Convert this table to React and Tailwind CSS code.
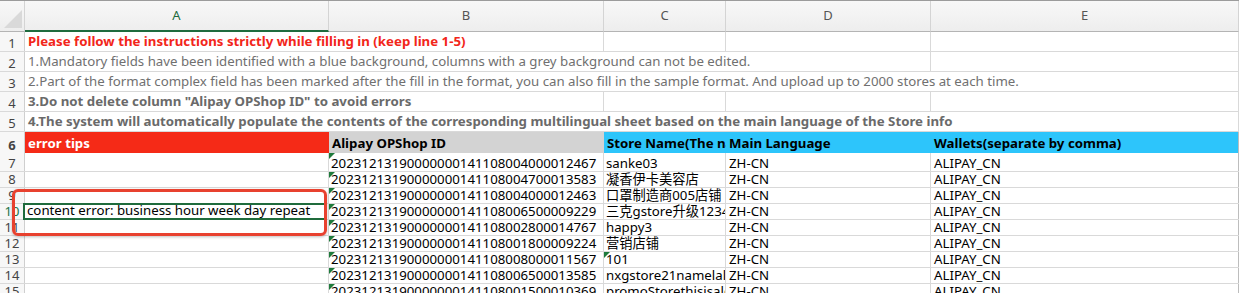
import React from 'react';
import clsx from 'clsx';

const rows = [
  ['20231213190000000141108004000012467', 'sanke03'],
  ['20231213190000000141108004700013583', '凝香伊卡美容店'],
  ['20231213190000000141108004000012463', '口罩制造商005店铺'],
  ['20231213190000000141108006500009229', '三克gstore升级12345'],
  ['20231213190000000141108002800014767', 'happy3'],
  ['20231213190000000141108001800009224', '营销店铺'],
  ['20231213190000000141108008000011567', '101', true],
  ['20231213190000000141108006500013585', 'nxgstore21namelalala'],
  ['20231213190000000141108001500010369', 'promoStorethisisalong'],
];

const notes = [
  { text: 'Please follow the instructions strictly while filling in (keep line 1-5)', cls: 'text-[#f2261a] font-bold', span: 2 },
  { text: '1.Mandatory fields have been identified with a blue background, columns with a grey background can not be edited.', cls: 'text-[#707070]', span: 4 },
  { text: '2.Part of the format complex field has been marked after the fill in the format, you can also fill in the sample format. And upload up to 2000 stores at each time.', cls: 'text-[#707070]', span: 5 },
  { text: '3.Do not delete column "Alipay OPShop ID" to avoid errors', cls: 'text-[#6a6a6a] font-bold', span: 2 },
  { text: '4.The system will automatically populate the contents of the corresponding multilingual sheet based on the main language of the Store info', cls: 'text-[#6a6a6a] font-bold', span: 5 },
];

// green "number stored as text" marker
const Flag = () => (
  <svg className="absolute left-0 top-0" width="6" height="6" viewBox="0 0 6 6">
    <polygon points="0,0 6,0 0,6" fill="#1e7a3c" />
  </svg>
);

const RowNum = ({ n, active }) => (
  <div className={clsx('w-[25px] shrink-0 border-r border-[#cfcfcf] bg-[#f7f7f7] flex items-end justify-center text-[13px] leading-[16px]', active ? 'text-[#217346] bg-[#e9e9e9]' : 'text-[#444]')}>
    {n}
  </div>
);

const NoteRow = ({ n, note }) => (
  <div className="flex h-[20px] border-b border-[#d9d9d9]">
    <RowNum n={n} />
    <div
      className={clsx(
        'shrink-0 border-r border-[#d9d9d9] px-[3px] flex items-end pb-[1px] whitespace-nowrap overflow-hidden text-[13.25px] leading-[17px]',
        note.cls,
        note.span === 2 && 'w-[579px]',
        note.span === 4 && 'w-[906px]',
        note.span === 5 && 'w-[1214px]'
      )}
    >
      {note.text}
    </div>
    {note.span < 3 && <div className="w-[122px] shrink-0 border-r border-[#d9d9d9]" />}
    {note.span < 4 && <div className="w-[205px] shrink-0 border-r border-[#d9d9d9]" />}
    {note.span < 5 && <div className="w-[308px] shrink-0 border-r border-[#d9d9d9]" />}
  </div>
);

const DataRow = ({ n, data, first }) => {
  const active = n === 10;
  return (
    <div className={clsx('flex border-b border-[#d9d9d9]', first ? 'h-[19px]' : 'h-[16px]')}>
      <RowNum n={n} active={active} />
      <div className="w-[304px] shrink-0 border-r border-[#d9d9d9] relative">
        {active && (
          <div className="absolute -left-[2px] -top-[1px] right-[1px] -bottom-[1px] border-2 border-[#1f6b3c] px-[2px] flex items-end text-[13.25px] leading-[15px] text-black whitespace-nowrap">
            content error: business hour week day repeat
          </div>
        )}
      </div>
      <div className="w-[275px] shrink-0 border-r border-[#d9d9d9] relative px-[2px] flex items-end text-[13.25px] leading-[15px] text-black whitespace-nowrap overflow-hidden">
        <Flag />
        {data[0]}
      </div>
      <div className="w-[122px] shrink-0 border-r border-[#d9d9d9] relative px-[2px] flex items-end text-[13.25px] leading-[15px] text-black whitespace-nowrap overflow-hidden">
        {data[2] && <Flag />}
        {data[1]}
      </div>
      <div className="w-[205px] shrink-0 border-r border-[#d9d9d9] px-[3px] flex items-end text-[13.25px] leading-[15px] text-black whitespace-nowrap">
        ZH-CN
      </div>
      <div className="w-[308px] shrink-0 border-r border-[#bdbdbd] px-[3px] flex items-end text-[13.25px] leading-[15px] text-black whitespace-nowrap">
        ALIPAY_CN
      </div>
    </div>
  );
};

const ColHead = ({ label, w, active }) => (
  <div
    className={clsx(
      'shrink-0 border-r border-[#d4d4d4] flex items-center justify-center text-[13px]',
      w,
      active ? 'text-[#1e6b3e] border-b-2 border-b-[#1e6b3e]' : 'text-[#555] border-b border-b-[#b4b4b4]'
    )}
  >
    {label}
  </div>
);

export default function App() {
  return (
    <div className="w-[1240px] h-[293px] overflow-hidden bg-white relative font-['Noto_Sans','Noto_Sans_CJK_SC',sans-serif]">
      <div className="w-[1239px]">
        {/* column letters */}
        <div className="flex h-[32px] border-t border-[#9c9c9c] bg-gradient-to-b from-[#f8f8f8] to-[#ededed]">
          <div className="w-[25px] shrink-0 border-r border-[#d4d4d4] border-b border-b-[#b4b4b4] relative">
            <svg className="absolute right-[2px] bottom-[3px]" width="18" height="18" viewBox="0 0 18 18">
              <polygon points="0,18 18,0 18,18" fill="#d9d9d9" />
            </svg>
          </div>
          <ColHead label="A" w="w-[304px]" active />
          <ColHead label="B" w="w-[275px]" />
          <ColHead label="C" w="w-[122px]" />
          <ColHead label="D" w="w-[205px]" />
          <ColHead label="E" w="w-[308px]" />
        </div>

        {notes.map((note, i) => (
          <NoteRow key={i} n={i + 1} note={note} />
        ))}

        {/* row 6: field headers */}
        <div className="flex h-[21px] text-[13.25px] font-bold leading-[17px]">
          <RowNum n={6} />
          <div className="w-[304px] shrink-0 bg-[#f52a17] text-white px-[3px] flex items-end pb-[1px]">error tips</div>
          <div className="w-[275px] shrink-0 bg-[#d3d3d3] text-black px-[3px] flex items-end pb-[1px]">Alipay OPShop ID</div>
          <div className="w-[122px] shrink-0 bg-[#2dc5fb] text-black px-[3px] flex items-end pb-[1px] whitespace-nowrap overflow-hidden">Store Name(The name of the store)</div>
          <div className="w-[205px] shrink-0 bg-[#2dc5fb] text-black px-[3px] flex items-end pb-[1px]">Main Language</div>
          <div className="w-[308px] shrink-0 bg-[#2dc5fb] text-black px-[3px] flex items-end pb-[1px] border-r border-[#bdbdbd]">Wallets(separate by comma)</div>
        </div>

        {rows.map((data, i) => (
          <DataRow key={i} n={i + 7} data={data} first={i === 0} />
        ))}
      </div>

      {/* annotation box */}
      <div className="absolute left-[12px] top-[189px] w-[315px] h-[47px] border-[3px] border-[#e8412f] rounded-[6px] shadow-[0_1px_3px_rgba(0,0,0,0.25)]" />
    </div>
  );
}
